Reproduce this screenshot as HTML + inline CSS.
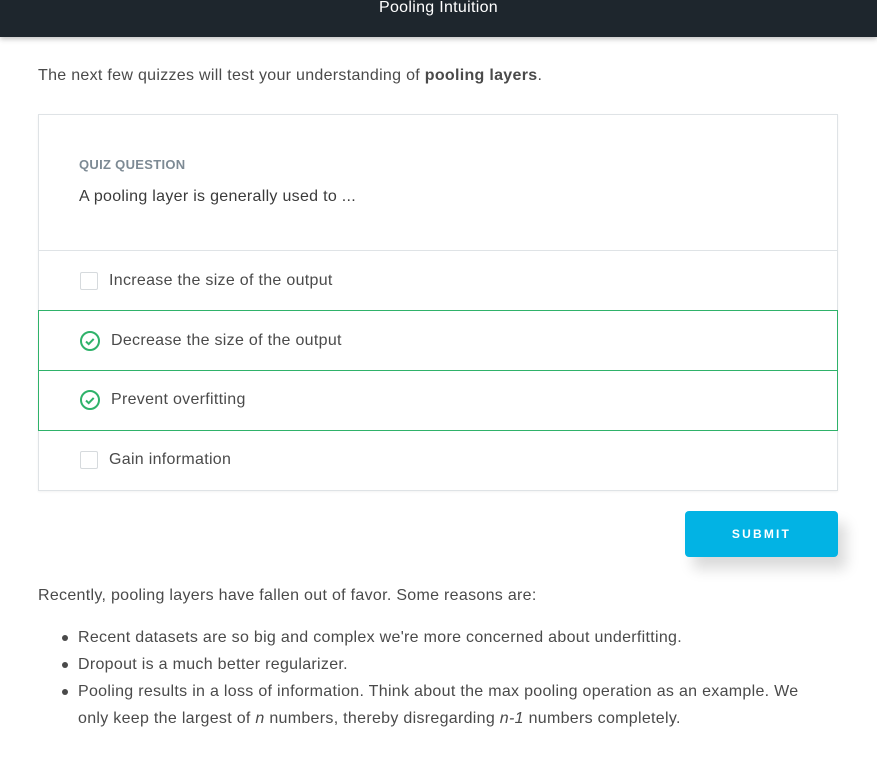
<!DOCTYPE html>
<html><head><meta charset="utf-8"><style>
*{box-sizing:border-box;margin:0;padding:0}
body{width:877px;height:776px;background:#fff;font-family:"Liberation Sans",sans-serif;color:#4a4a4a;overflow:hidden;position:relative;letter-spacing:0.3px}
.top{position:absolute;left:0;top:0;width:877px;height:37px;background:#1e262d;box-shadow:0 2px 5px rgba(0,0,0,.25);color:#fff;font-size:16px;text-align:center;line-height:16px}
.top span{position:relative;top:0px}
.p{position:absolute;left:38px;font-size:16px;color:#4a4a4a}
.card{position:absolute;left:38px;top:114px;width:800px;height:377px;border:1px solid #dfe3e6;box-shadow:0 1px 2px rgba(0,0,0,.05)}
.qq{position:absolute;left:40px;top:42px;font-size:13px;font-weight:bold;color:#7d8a94;letter-spacing:.3px}
.qt{position:absolute;left:40px;top:73px;font-size:16px;color:#3a3a3a}
.row{position:absolute;left:-1px;width:800px;height:61px;font-size:16px;color:#4a4a4a}
.row .t{position:absolute;left:71px;top:21px}
.cb{position:absolute;left:41px;top:21px;width:18px;height:18px;border:1px solid #d6dadd;border-radius:2px}
.ok{border:1px solid #2fb26a}
.ok .t{left:72px}
.ok svg{position:absolute;left:40px;top:19px}
.btn{position:absolute;left:685px;top:511px;width:153px;height:46px;background:#02b3e4;border-radius:4px;color:#fff;font-size:12px;font-weight:bold;letter-spacing:2.2px;text-align:center;line-height:46px;box-shadow:8px 12px 14px rgba(0,0,0,.15)}
ul{position:absolute;left:60px;top:624px;list-style:none;font-size:16px;line-height:27px;width:760px}
li{position:relative;padding-left:18px}
li:before{content:"";position:absolute;left:2px;top:11px;width:6px;height:6px;border-radius:50%;background:#4a4a4a}
</style></head><body>
<div class="top"><span>Pooling Intuition</span></div>
<div class="p" style="top:67px">The next few quizzes will test your understanding of <b>pooling layers</b>.</div>
<div class="card">
<div class="qq">QUIZ QUESTION</div>
<div class="qt">A pooling layer is generally used to ...</div>
<div class="row" style="top:135px;border-top:1px solid #dfe3e6;left:0;width:798px"><div class="cb"></div><div class="t" style="left:70px">Increase the size of the output</div></div>
<div class="row ok" style="top:195px"><svg width="22" height="22" viewBox="0 0 22 22"><circle cx="11" cy="11" r="9" fill="none" stroke="#2fb26a" stroke-width="2"/><path d="M7 11.5l2.7 2.6 5-5.2" fill="none" stroke="#2fb26a" stroke-width="2"/></svg><div class="t">Decrease the size of the output</div></div>
<div class="row ok" style="top:255px;border-top:none;height:61px"><svg width="22" height="22" viewBox="0 0 22 22"><circle cx="11" cy="11" r="9" fill="none" stroke="#2fb26a" stroke-width="2"/><path d="M7 11.5l2.7 2.6 5-5.2" fill="none" stroke="#2fb26a" stroke-width="2"/></svg><div class="t">Prevent overfitting</div></div>
<div class="row" style="top:315px;left:0;width:798px"><div class="cb"></div><div class="t" style="left:70px">Gain information</div></div>
</div>
<div class="btn">SUBMIT</div>
<div class="p" style="top:587px">Recently, pooling layers have fallen out of favor. Some reasons are:</div>
<ul>
<li>Recent datasets are so big and complex we're more concerned about underfitting.</li>
<li>Dropout is a much better regularizer.</li>
<li>Pooling results in a loss of information. Think about the max pooling operation as an example. We<br>only keep the largest of <i>n</i> numbers, thereby disregarding <i>n-1</i> numbers completely.</li>
</ul>
</body></html>
